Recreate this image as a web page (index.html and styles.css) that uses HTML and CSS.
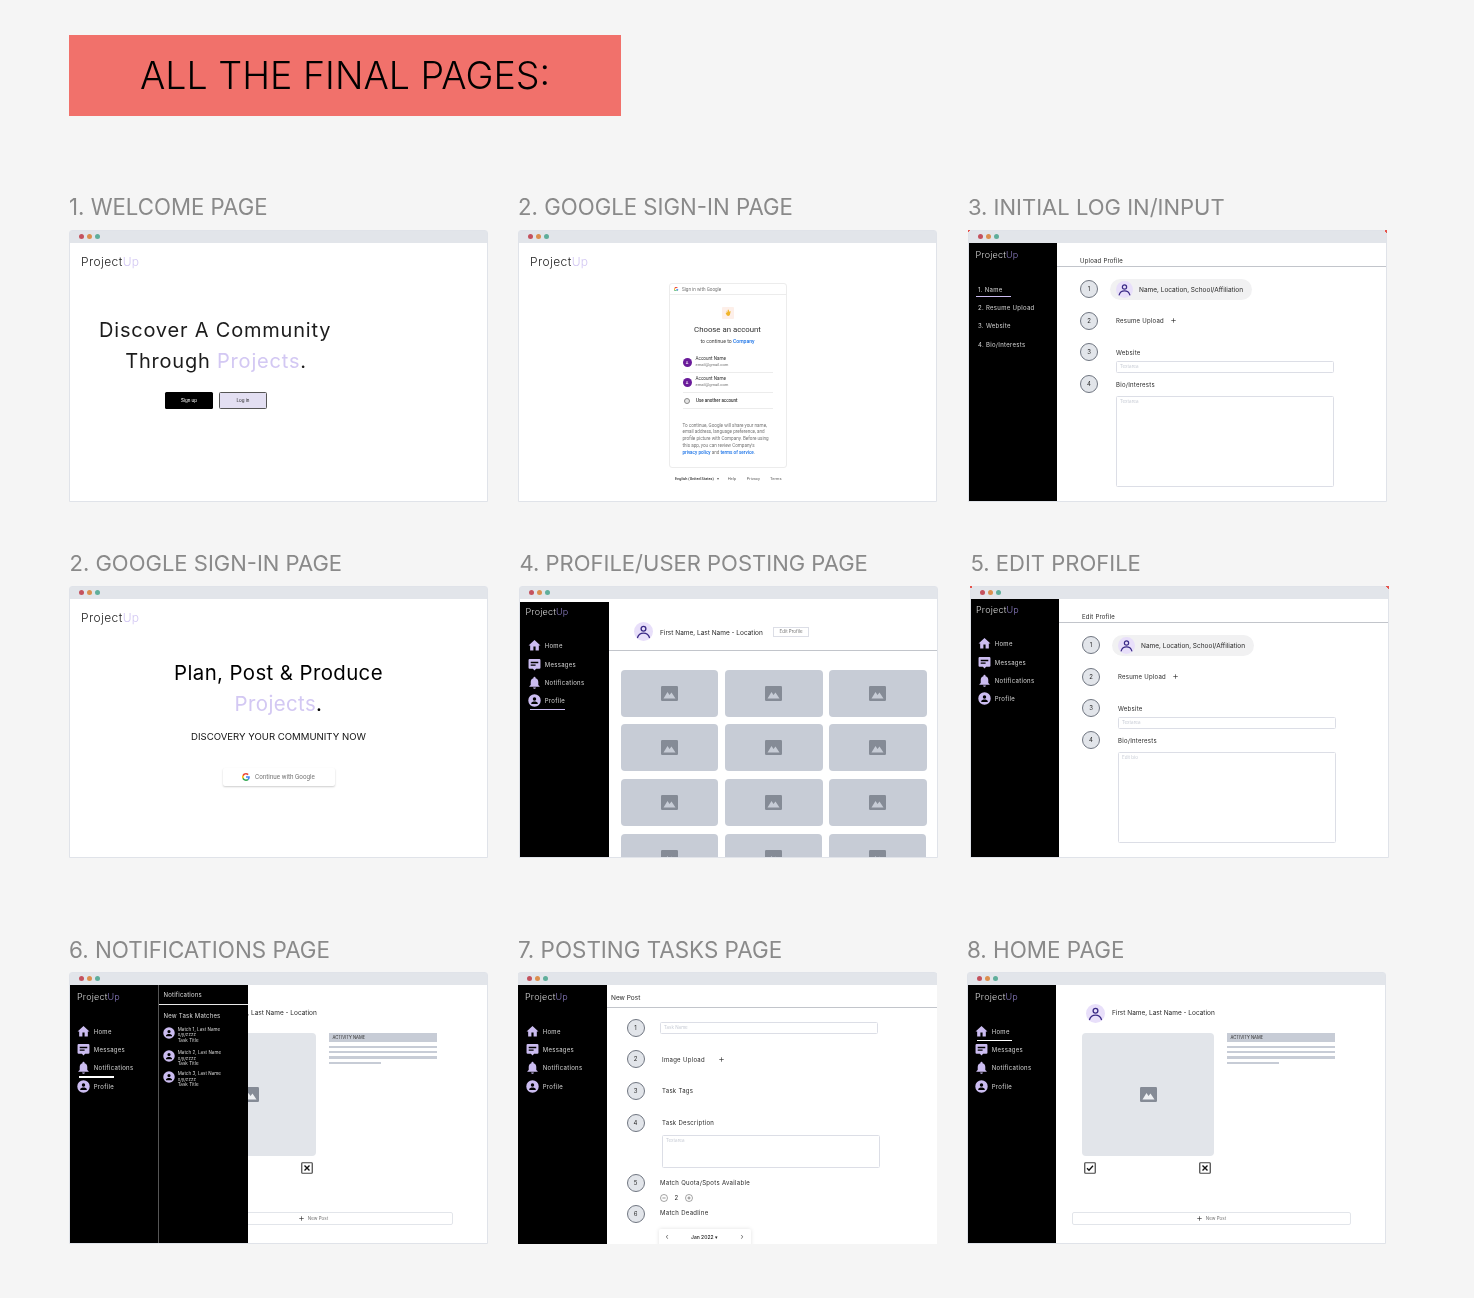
FILE: index.html
```html
<!DOCTYPE html>
<html lang="en">
<head>
  <meta charset="UTF-8" />
  <title>All the final pages</title>
  <link rel="stylesheet" href="styles.css">
</head>
<body>

  <!-- Icons -->
  <svg class="icon-defs" aria-hidden="true">
    <symbol id="i-home" viewBox="0 0 24 24"><path d="M10 21v-7h4v7h6v-9h3L12 2 1 12h3v9z"/></symbol>
    <symbol id="i-msg" viewBox="0 0 24 24"><path d="M3 2h18a2 2 0 0 1 2 2v14a2 2 0 0 1-2 2h-6l-3 3-3-3H3a2 2 0 0 1-2-2V4a2 2 0 0 1 2-2zm2 5v2.500h14V7zm0 5v2.500h9V12z" fill-rule="evenodd"/></symbol>
    <symbol id="i-bell" viewBox="0 0 24 24"><path d="M12 23.500c1.300 0 2.500-1 2.500-2.300h-5c0 1.300 1.200 2.300 2.500 2.300zm7-7v-5.500c0-3.300-1.800-6-5-6.800V3.500a2 2 0 0 0-4 0v.7C6.800 5 5 7.700 5 11v5.500L2.500 19v1h19v-1z"/></symbol>
    <symbol id="i-user" viewBox="0 0 24 24"><path fill-rule="evenodd" d="M12 .5a11.500 11.500 0 1 1 0 23 11.500 11.500 0 0 1 0-23zm0 5.500a3.200 3.200 0 1 0 0 6.400A3.200 3.200 0 0 0 12 6zm0 8c-2.800 0-6 1.300-6 3v1.500h12V17c0-1.700-3.200-3-6-3z"/></symbol>
    <symbol id="i-person" viewBox="0 0 24 24"><circle cx="12" cy="8.500" r="3" fill="none" stroke="#3a2a86" stroke-width="1.700"/><path d="M4.500 19.500c1.200-4 4.200-5.500 7.500-5.500s6.300 1.500 7.500 5.500" fill="none" stroke="#3a2a86" stroke-width="1.700" stroke-linecap="round"/></symbol>
    <symbol id="i-image" viewBox="0 0 34 30"><rect width="34" height="30" rx="2.500" fill="#858b96"/><path d="M5 25l8-13 4 6 4-5 8 12z" fill="currentColor"/></symbol>
    <symbol id="i-g" viewBox="0 0 48 48">
      <path fill="#EA4335" d="M24 9.500c3.540 0 6.710 1.220 9.210 3.600l6.850-6.850C35.900 2.380 30.470 0 24 0 14.620 0 6.510 5.380 2.560 13.220l7.980 6.190C12.430 13.720 17.740 9.500 24 9.500z"/>
      <path fill="#4285F4" d="M46.980 24.550c0-1.570-.15-3.090-.38-4.550H24v9.020h12.940c-.58 2.960-2.260 5.480-4.780 7.180l7.730 6c4.510-4.180 7.090-10.360 7.090-17.650z"/>
      <path fill="#FBBC05" d="M10.530 28.590c-.48-1.450-.76-2.990-.76-4.590s.27-3.140.76-4.590l-7.980-6.190C.92 16.460 0 20.120 0 24c0 3.880.92 7.540 2.560 10.780l7.970-6.190z"/>
      <path fill="#34A853" d="M24 48c6.480 0 11.930-2.130 15.890-5.810l-7.730-6c-2.150 1.450-4.920 2.300-8.160 2.300-6.260 0-11.570-4.220-13.470-9.910l-7.980 6.190C6.510 42.620 14.620 48 24 48z"/>
    </symbol>
    <symbol id="i-check" viewBox="0 0 24 24"><rect x="1.500" y="1.500" width="21" height="21" rx="1.500" fill="none" stroke="#444" stroke-width="2.400"/><path d="M6 12.500l4 4 8-9" fill="none" stroke="#111" stroke-width="2.600"/></symbol>
    <symbol id="i-cross" viewBox="0 0 24 24"><rect x="1.500" y="1.500" width="21" height="21" rx="1.500" fill="none" stroke="#444" stroke-width="2.400"/><path d="M7 7l10 10M17 7L7 17" stroke="#111" stroke-width="2.800"/></symbol>
    <symbol id="i-plus" viewBox="0 0 10 10"><path d="M5 .5v9M.5 5h9" stroke="#333" stroke-width="1.300" fill="none"/></symbol>
    <symbol id="i-minus-o" viewBox="0 0 10 10"><circle cx="5" cy="5" r="4.400" fill="none" stroke="#444" stroke-width=".6"/><path d="M3 5h4" stroke="#444" stroke-width=".7"/></symbol>
    <symbol id="i-plus-o" viewBox="0 0 10 10"><circle cx="5" cy="5" r="4.400" fill="none" stroke="#444" stroke-width=".6"/><path d="M3 5h4M5 3v4" stroke="#444" stroke-width=".7"/></symbol>
  </svg>

  <main class="board">

    <div class="banner"><h1>ALL THE FINAL PAGES:</h1></div>

    <!-- Row 1 -->
    <section class="row row-one">

      <article class="shot">
        <h2>1. WELCOME PAGE</h2>
        <div class="window">
          <div class="window-bar"><i class="dot red"></i><i class="dot orange"></i><i class="dot green"></i></div>
          <div class="window-body page">
            <div class="logo">Project<span>Up</span></div>
            <div class="welcome">
              <p class="hero">Discover A Community</p>
              <p class="hero hero-shift">Through <span>Projects</span>.</p>
              <div class="welcome-btns">
                <button class="btn btn-dark">Sign up</button>
                <button class="btn btn-light">Log in</button>
              </div>
            </div>
          </div>
        </div>
      </article>

      <article class="shot">
        <h2>2. GOOGLE SIGN-IN PAGE</h2>
        <div class="window">
          <div class="window-bar"><i class="dot red"></i><i class="dot orange"></i><i class="dot green"></i></div>
          <div class="window-body page">
            <div class="logo">Project<span>Up</span></div>
            <div class="google-card">
              <div class="google-head"><svg class="g-mark"><use href="#i-g"/></svg>Sign in with Google</div>
              <div class="google-app">
                <svg viewBox="0 0 12 12"><path d="M4.500 3.500l1 2 .3-2.800h1l.2 2.400 1-1 .6.500-.6 2.900c-.3 1-1 1.400-1.800 1.400-.9 0-1.400-.5-1.700-1.200L3.600 6l.7-.4.600.6z" fill="#f0b429"/></svg>
              </div>
              <div class="google-title">Choose an account</div>
              <div class="google-sub">to continue to <span>Company</span></div>
              <div class="account">
                <b class="account-pic">A</b>
                <div><div class="account-name">Account Name</div><div class="account-mail">email@gmail.com</div></div>
              </div>
              <div class="account">
                <b class="account-pic">A</b>
                <div><div class="account-name">Account Name</div><div class="account-mail">email@gmail.com</div></div>
              </div>
              <div class="account account-other"><b class="account-ring"></b><div class="account-name">Use another account</div></div>
              <p class="google-note">To continue, Google will share your name,<br>email address, language preference, and<br>profile picture with Company. Before using<br>this app, you can review Company's<br><span>privacy policy</span> and <span>terms of service</span>.</p>
            </div>
            <div class="google-foot">
              <span class="foot-lang">English (United States)</span><span class="foot-caret">▾</span>
              <span class="foot-help">Help</span><span class="foot-privacy">Privacy</span><span class="foot-terms">Terms</span>
            </div>
          </div>
        </div>
      </article>

      <article class="shot shot-nudge">
        <h2 class="title-tight">3. INITIAL LOG IN/INPUT</h2>
        <div class="window window-flag">
          <div class="window-bar"><i class="dot red"></i><i class="dot orange"></i><i class="dot green"></i></div>
          <div class="window-body">
            <aside class="sidebar">
              <div class="logo logo-side logo-three">Project<span>Up</span></div>
              <ul class="nav nav-steps">
                <li class="active">1. Name</li>
                <li>2. Resume Upload</li>
                <li>3. Website</li>
                <li>4. Bio/Interests</li>
              </ul>
            </aside>
            <div class="content">
              <div class="content-head">Upload Profile</div>
              <div class="steps">
                <div class="step">
                  <b class="num">1</b>
                  <div class="pill"><span class="avatar avatar-sm"><svg><use href="#i-person"/></svg></span>Name, Location, School/Affiliation</div>
                </div>
                <div class="step">
                  <b class="num">2</b>
                  <div class="label">Resume Upload<svg class="plus"><use href="#i-plus"/></svg></div>
                </div>
                <div class="step">
                  <b class="num">3</b>
                  <div class="group"><div class="label">Website</div><div class="field field-line">Textarea</div></div>
                </div>
                <div class="step">
                  <b class="num">4</b>
                  <div class="group"><div class="label">Bio/Interests</div><div class="field field-area">Textarea</div></div>
                </div>
              </div>
            </div>
          </div>
        </div>
      </article>

    </section>

    <!-- Row 2 -->
    <section class="row row-two">

      <article class="shot">
        <h2>2. GOOGLE SIGN-IN PAGE</h2>
        <div class="window">
          <div class="window-bar"><i class="dot red"></i><i class="dot orange"></i><i class="dot green"></i></div>
          <div class="window-body page">
            <div class="logo">Project<span>Up</span></div>
            <div class="landing">
              <p class="hero hero-big">Plan, Post &amp; Produce</p>
              <p class="hero hero-big"><span>Projects</span>.</p>
              <p class="landing-sub">DISCOVERY YOUR COMMUNITY NOW</p>
              <button class="google-btn"><svg class="g-mark"><use href="#i-g"/></svg>Continue with Google</button>
            </div>
          </div>
        </div>
      </article>

      <article class="shot">
        <h2>4. PROFILE/USER POSTING PAGE</h2>
        <div class="window">
          <div class="window-bar"><i class="dot red"></i><i class="dot orange"></i><i class="dot green"></i></div>
          <div class="window-body">
            <aside class="sidebar sidebar-low">
              <div class="logo logo-side">Project<span>Up</span></div>
              <ul class="nav">
                <li><svg><use href="#i-home"/></svg>Home</li>
                <li><svg><use href="#i-msg"/></svg>Messages</li>
                <li><svg><use href="#i-bell"/></svg>Notifications</li>
                <li class="active"><svg><use href="#i-user"/></svg>Profile</li>
              </ul>
            </aside>
            <div class="content">
              <div class="profile-head">
                <span class="avatar"><svg><use href="#i-person"/></svg></span>
                <span class="person">First Name, Last Name - Location</span>
                <button class="edit-btn">Edit Profile</button>
              </div>
              <div class="tiles">
                <div class="tile"><svg class="pic"><use href="#i-image"/></svg></div>
                <div class="tile"><svg class="pic"><use href="#i-image"/></svg></div>
                <div class="tile"><svg class="pic"><use href="#i-image"/></svg></div>
                <div class="tile"><svg class="pic"><use href="#i-image"/></svg></div>
                <div class="tile"><svg class="pic"><use href="#i-image"/></svg></div>
                <div class="tile"><svg class="pic"><use href="#i-image"/></svg></div>
                <div class="tile"><svg class="pic"><use href="#i-image"/></svg></div>
                <div class="tile"><svg class="pic"><use href="#i-image"/></svg></div>
                <div class="tile"><svg class="pic"><use href="#i-image"/></svg></div>
                <div class="tile"><svg class="pic"><use href="#i-image"/></svg></div>
                <div class="tile tile-narrow"><svg class="pic"><use href="#i-image"/></svg></div>
                <div class="tile tile-narrow"><svg class="pic"><use href="#i-image"/></svg></div>
              </div>
            </div>
          </div>
        </div>
      </article>

      <article class="shot shot-nudge">
        <h2>5. EDIT PROFILE</h2>
        <div class="window window-flag">
          <div class="window-bar"><i class="dot red"></i><i class="dot orange"></i><i class="dot green"></i></div>
          <div class="window-body">
            <aside class="sidebar sidebar-high">
              <div class="logo logo-side">Project<span>Up</span></div>
              <ul class="nav">
                <li><svg><use href="#i-home"/></svg>Home</li>
                <li><svg><use href="#i-msg"/></svg>Messages</li>
                <li><svg><use href="#i-bell"/></svg>Notifications</li>
                <li><svg><use href="#i-user"/></svg>Profile</li>
              </ul>
            </aside>
            <div class="content">
              <div class="content-head">Edit Profile</div>
              <div class="steps">
                <div class="step">
                  <b class="num">1</b>
                  <div class="pill"><span class="avatar avatar-sm"><svg><use href="#i-person"/></svg></span>Name, Location, School/Affiliation</div>
                </div>
                <div class="step">
                  <b class="num">2</b>
                  <div class="label">Resume Upload<svg class="plus"><use href="#i-plus"/></svg></div>
                </div>
                <div class="step">
                  <b class="num">3</b>
                  <div class="group"><div class="label">Website</div><div class="field field-line">Textarea</div></div>
                </div>
                <div class="step">
                  <b class="num">4</b>
                  <div class="group"><div class="label">Bio/Interests</div><div class="field field-area">Edit bio</div></div>
                </div>
              </div>
            </div>
          </div>
        </div>
      </article>

    </section>

    <!-- Row 3 -->
    <section class="row row-three">

      <article class="shot">
        <h2>6. NOTIFICATIONS PAGE</h2>
        <div class="window">
          <div class="window-bar"><i class="dot red"></i><i class="dot orange"></i><i class="dot green"></i></div>
          <div class="window-body">
            <aside class="sidebar">
              <div class="logo logo-side">Project<span>Up</span></div>
              <ul class="nav nav-white">
                <li><svg><use href="#i-home"/></svg>Home</li>
                <li><svg><use href="#i-msg"/></svg>Messages</li>
                <li class="active"><svg><use href="#i-bell"/></svg>Notifications</li>
                <li><svg><use href="#i-user"/></svg>Profile</li>
              </ul>
            </aside>
            <div class="content">
              <div class="feed-head">
                <span class="avatar"><svg><use href="#i-person"/></svg></span>
                <span class="person">First Name, Last Name - Location</span>
              </div>
              <div class="feed">
                <div class="feed-left">
                  <div class="feed-image"><svg class="pic"><use href="#i-image"/></svg></div>
                  <div class="feed-actions">
                    <svg><use href="#i-check"/></svg>
                    <svg><use href="#i-cross"/></svg>
                  </div>
                </div>
                <div class="activity">
                  <div class="activity-name">ACTIVITY NAME</div>
                  <i class="bar"></i><i class="bar"></i><i class="bar"></i><i class="bar bar-short"></i>
                </div>
              </div>
              <button class="new-post"><svg class="plus-sm"><use href="#i-plus"/></svg>New Post</button>
            </div>
            <div class="notifications">
              <div class="notifications-head">Notifications</div>
              <div class="notifications-title">New Task Matches</div>
              <div class="notice"><svg><use href="#i-user"/></svg><div>Match 1, Last Name<br>x/y/zzzz<br>Task Title</div></div>
              <div class="notice"><svg><use href="#i-user"/></svg><div>Match 2, Last Name<br>x/y/zzzz<br>Task Title</div></div>
              <div class="notice"><svg><use href="#i-user"/></svg><div>Match 3, Last Name<br>x/y/zzzz<br>Task Title</div></div>
            </div>
          </div>
        </div>
      </article>

      <article class="shot">
        <h2>7. POSTING TASKS PAGE</h2>
        <div class="window window-open">
          <div class="window-bar"><i class="dot red"></i><i class="dot orange"></i><i class="dot green"></i></div>
          <div class="window-body">
            <aside class="sidebar">
              <div class="logo logo-side logo-seven">Project<span>Up</span></div>
              <ul class="nav">
                <li><svg><use href="#i-home"/></svg>Home</li>
                <li><svg><use href="#i-msg"/></svg>Messages</li>
                <li><svg><use href="#i-bell"/></svg>Notifications</li>
                <li><svg><use href="#i-user"/></svg>Profile</li>
              </ul>
            </aside>
            <div class="content">
              <div class="post-head">New Post</div>
              <div class="steps steps-post">
                <div class="step">
                  <b class="num">1</b>
                  <div class="field field-line field-task">Task Name</div>
                </div>
                <div class="step">
                  <b class="num">2</b>
                  <div class="label label-in">Image Upload<svg class="plus plus-far"><use href="#i-plus"/></svg></div>
                </div>
                <div class="step">
                  <b class="num">3</b>
                  <div class="label label-in">Task Tags</div>
                </div>
                <div class="step step-tall">
                  <b class="num">4</b>
                  <div class="group"><div class="label label-in">Task Description</div><div class="field field-desc">Textarea</div></div>
                </div>
                <div class="step">
                  <b class="num">5</b>
                  <div class="group">
                    <div class="label">Match Quota/Spots Available</div>
                    <div class="counter"><svg><use href="#i-minus-o"/></svg><span>2</span><svg><use href="#i-plus-o"/></svg></div>
                  </div>
                </div>
                <div class="step">
                  <b class="num">6</b>
                  <div class="group">
                    <div class="label label-up">Match Deadline</div>
                    <div class="calendar"><span>‹</span><strong>Jan 2022 ▾</strong><span>›</span></div>
                  </div>
                </div>
              </div>
            </div>
          </div>
        </div>
      </article>

      <article class="shot">
        <h2>8. HOME PAGE</h2>
        <div class="window">
          <div class="window-bar"><i class="dot red"></i><i class="dot orange"></i><i class="dot green"></i></div>
          <div class="window-body">
            <aside class="sidebar">
              <div class="logo logo-side">Project<span>Up</span></div>
              <ul class="nav nav-white">
                <li class="active"><svg><use href="#i-home"/></svg>Home</li>
                <li><svg><use href="#i-msg"/></svg>Messages</li>
                <li><svg><use href="#i-bell"/></svg>Notifications</li>
                <li><svg><use href="#i-user"/></svg>Profile</li>
              </ul>
            </aside>
            <div class="content">
              <div class="feed-head">
                <span class="avatar"><svg><use href="#i-person"/></svg></span>
                <span class="person">First Name, Last Name - Location</span>
              </div>
              <div class="feed">
                <div class="feed-left">
                  <div class="feed-image"><svg class="pic"><use href="#i-image"/></svg></div>
                  <div class="feed-actions">
                    <svg><use href="#i-check"/></svg>
                    <svg><use href="#i-cross"/></svg>
                  </div>
                </div>
                <div class="activity">
                  <div class="activity-name">ACTIVITY NAME</div>
                  <i class="bar"></i><i class="bar"></i><i class="bar"></i><i class="bar bar-short"></i>
                </div>
              </div>
              <button class="new-post"><svg class="plus-sm"><use href="#i-plus"/></svg>New Post</button>
            </div>
          </div>
        </div>
      </article>

    </section>

  </main>
</body>
</html>
```

FILE: styles.css
```css
:root {
  --lilac: #d3c8f3;
  --icon: #cbbcf0;
  --line: #e0e3e9;
  --tile: #c7ccd6;
  --soft: #e2e5ea;
  --text: #2b2b2b;
}

* {
  box-sizing: border-box;
}

body {
  margin: 0;
  background-color: #f5f5f5;
  font-family: Inter, 'Noto Sans', sans-serif;
  color: var(--text);
}

p, h1, h2, ul {
  margin: 0;
  padding: 0;
}

button {
  font-family: inherit;
  padding: 0;
}

.icon-defs {
  display: none;
}

.board {
  padding: 35px 0 54px 69px;
  filter: blur(0.35px);
  will-change: transform;
}

/* Banner */
.banner {
  width: 552px;
  height: 81px;
  padding-left: 71px;
  background-color: #f1716b;
  display: flex;
  align-items: center;
}

.banner h1 {
  font-size: 37.600px;
  font-weight: 300;
  color: #000;
}

/* Rows */
.row {
  display: flex;
}

.row-one {
  margin-top: 79px;
  gap: 30px;
}

.row-two {
  margin-top: 49px;
  gap: 31px;
}

.row-three {
  margin-top: 80px;
  gap: 30px;
}

.shot {
  width: 419px;
}

.shot-nudge {
  margin-left: 1px;
}

.shot h2 {
  height: 24px;
  margin-bottom: 11px;
  font-size: 22.200px;
  line-height: 24px;
  font-weight: 400;
  color: #8a8a8a;
  white-space: nowrap;
}

.shot h2.title-tight {
  font-size: 22px;
}

.row-two .shot h2 {
  padding-left: 0.500px;
  font-size: 22px;
}

.row-three .shot h2 {
  margin-bottom: 10px;
  font-size: 22.400px;
}

/* Window frame */
.window {
  position: relative;
  height: 272px;
  display: flex;
  flex-direction: column;
  background-color: white;
  border: 1px solid var(--line);
  border-radius: 3px 3px 0 0;
}

.window-bar {
  height: 12px;
  flex: none;
  padding: 0 0 1px 9px;
  background-color: var(--soft);
  display: flex;
  align-items: center;
  gap: 3px;
}

.dot {
  width: 5px;
  height: 5px;
  border-radius: 50%;
}

.dot.red { background-color: #c4525e; }
.dot.orange { background-color: #dc8f4e; }
.dot.green { background-color: #5fae9b; }

.window-body {
  position: relative;
  flex: 1;
  min-height: 0;
  display: flex;
  overflow: hidden;
}

.window-flag::before, .window-flag::after {
  content: "";
  position: absolute;
  top: -1px;
  width: 3px;
  height: 3px;
}

.window-flag::before {
  left: -1px;
  background: linear-gradient(135deg, #e5544c 50%, transparent 50%);
}

.window-flag::after {
  right: -1px;
  background: linear-gradient(225deg, #e5544c 50%, transparent 50%);
}

.window-open {
  border-width: 1px 0 0 0;
}

/* Plain pages */
.page {
  flex-direction: column;
  padding: 12px 0 0 11px;
}

.logo {
  font-size: 12px;
  line-height: 14px;
  font-weight: 300;
  letter-spacing: 0.4px;
  color: #222;
}

.logo span {
  color: var(--lilac);
}

.hero {
  font-size: 20px;
  line-height: 31px;
  letter-spacing: 0.8px;
  text-align: center;
  color: #1c1c1c;
  white-space: nowrap;
}

.hero span {
  color: var(--lilac);
}

.hero-shift {
  padding-left: 3px;
}

.welcome {
  width: 231px;
  margin: 46px 0 0 18px;
}

.welcome-btns {
  margin-top: 15px;
  padding-left: 3px;
  display: flex;
  justify-content: center;
  gap: 6px;
}

.btn {
  width: 48px;
  height: 17px;
  font-size: 4.500px;
  border-radius: 1.500px;
}

.btn-dark {
  background-color: #000;
  color: white;
  border: none;
}

.btn-light {
  background-color: #e3dff2;
  color: #222;
  border: 1px solid #555;
}

/* Google account chooser */
.google-card {
  width: 118px;
  height: 185px;
  margin: 14px 0 0 138.500px;
  border: 1px solid #ececec;
  border-radius: 3px;
}

.google-head {
  height: 11px;
  padding-left: 4.500px;
  border-bottom: 1px solid #ececec;
  display: flex;
  align-items: center;
  gap: 3.500px;
  font-family: Roboto, sans-serif;
  font-size: 4.600px;
  color: #777;
}

.google-head .g-mark {
  width: 4.500px;
  height: 4.500px;
}

.google-app {
  width: 12px;
  height: 12px;
  margin: 12px auto 0;
  background-color: #fdefe9;
  border-radius: 1px;
  display: flex;
}

.google-title {
  margin-top: 5.500px;
  font-family: Roboto, sans-serif;
  font-size: 7.800px;
  line-height: 10px;
  text-align: center;
  color: #333;
}

.google-sub {
  margin-top: 3px;
  font-family: Roboto, sans-serif;
  font-size: 5.100px;
  line-height: 7px;
  text-align: center;
  color: #444;
}

.google-sub span, .google-note span {
  color: #1a73e8;
  font-weight: 500;
}

.account {
  width: 90px;
  height: 20px;
  margin-left: 13px;
  border-bottom: 1px solid #ececec;
  display: flex;
  align-items: center;
  gap: 4px;
  font-family: Roboto, sans-serif;
}

.google-sub + .account {
  margin-top: 8px;
}

.account-pic {
  width: 9px;
  height: 9px;
  flex: none;
  border-radius: 50%;
  background-color: #6a1b9a;
  color: white;
  font-size: 4px;
  font-weight: 400;
  line-height: 9px;
  text-align: center;
}

.account-name {
  font-size: 4.600px;
  line-height: 6px;
  color: #333;
}

.account-mail {
  font-size: 4.100px;
  line-height: 6px;
  color: #777;
}

.account-other {
  height: 16px;
  padding-top: 1.500px;
}

.account-other .account-name {
  font-size: 4.500px;
  font-weight: 500;
  white-space: nowrap;
}

.account-ring {
  width: 6px;
  height: 6px;
  margin: 0 2px 0 1.500px;
  flex: none;
  border-radius: 50%;
  background-color: #e6e6e6;
  border: 1px solid #888;
}

.google-note {
  width: 100px;
  margin: 14px 0 0 13px;
  font-family: Roboto, sans-serif;
  font-size: 4.600px;
  line-height: 6.750px;
  color: #777;
  white-space: nowrap;
}

.google-foot {
  margin: 8px 0 0 145px;
  display: flex;
  font-family: Roboto, sans-serif;
  font-size: 4.100px;
  line-height: 6px;
  color: #666;
  white-space: nowrap;
}

.foot-lang {
  width: 41px;
  font-size: 3.800px;
  font-weight: 500;
  color: #333;
}

.foot-caret {
  width: 11.700px;
  padding-left: 1px;
}

.foot-help {
  width: 19px;
}

.foot-privacy {
  width: 23.300px;
}

/* Landing */
.landing {
  width: 395px;
  margin-top: 31.500px;
  text-align: center;
}

.hero-big {
  font-size: 20.400px;
  letter-spacing: 0.4px;
  color: #000;
}

.landing-sub {
  margin-top: 12.500px;
  font-size: 9.600px;
  line-height: 12px;
  color: #111;
  white-space: nowrap;
}

.google-btn {
  width: 112px;
  height: 18px;
  margin-top: 25px;
  background-color: white;
  border: none;
  border-radius: 2px;
  box-shadow: 0 1px 2px rgba(0,0,0,0.2);
  display: inline-flex;
  align-items: center;
  justify-content: center;
  gap: 5px;
  font-family: Roboto, sans-serif;
  font-size: 6.300px;
  color: #777;
}

.google-btn .g-mark {
  width: 8px;
  height: 8px;
}

/* Sidebar */
.sidebar {
  width: 89px;
  flex: none;
  margin-left: -1px;
  padding-top: 5px;
  background-color: #000;
}

.window-open .sidebar {
  margin-left: 0;
}

.sidebar-low {
  margin: 2.500px 0 0;
  padding-top: 3px;
}

.sidebar-high {
  padding-top: 3.500px;
}

.logo-side {
  padding-left: 8px;
  font-size: 9px;
  letter-spacing: 0.2px;
  color: #d6d6d6;
}

.logo-side span {
  color: #8a7cc0;
}

.logo-three {
  padding-left: 7.500px;
}

.logo-seven {
  padding-left: 7px;
}

.sidebar-low .logo-side {
  padding-left: 5.500px;
}

.sidebar-high .logo-side {
  padding-left: 6px;
}

.nav {
  margin-top: 18.400px;
  list-style: none;
}

.nav li {
  position: relative;
  height: 18.200px;
  padding-left: 8.200px;
  display: flex;
  align-items: center;
  gap: 3.500px;
  font-size: 6px;
  letter-spacing: 0.3px;
  color: #cfcfcf;
}

.nav svg {
  width: 13px;
  height: 13px;
  fill: var(--icon);
}

.nav li.active::after {
  content: "";
  position: absolute;
  left: 10px;
  top: 17.500px;
  width: 34.500px;
  height: 1.500px;
  background-color: var(--icon);
}

.nav-white li.active::after {
  top: 17.300px;
  background-color: white;
}

.nav-steps li {
  padding-left: 10px;
}

.nav-steps li.active::after {
  left: 8px;
  top: 15.500px;
  width: 35px;
}

/* Main panel */
.content {
  flex: 1;
  min-width: 0;
}

.content-head {
  height: 24px;
  padding: 14px 0 0 23px;
  border-bottom: 1px solid #c2c5cb;
  font-size: 6px;
  line-height: 8px;
  letter-spacing: 0.2px;
}

.post-head {
  height: 22.500px;
  padding: 9px 0 0 4px;
  border-bottom: 1px solid #c2c5cb;
  font-size: 6.500px;
  line-height: 8px;
}

.steps {
  padding: 13px 0 0 23px;
}

.step {
  min-height: 31.700px;
  display: flex;
  align-items: flex-start;
  gap: 18px;
}

.num {
  width: 18px;
  height: 18px;
  flex: none;
  border-radius: 50%;
  background-color: var(--soft);
  border: 1px solid #6f7580;
  font-size: 6px;
  font-weight: 400;
  line-height: 16px;
  text-align: center;
}

.label {
  height: 18px;
  display: flex;
  align-items: center;
  font-size: 6px;
  letter-spacing: 0.25px;
  white-space: nowrap;
}

.plus {
  width: 5px;
  height: 5px;
  margin-left: 7px;
}

.pill {
  height: 21px;
  margin: -1px 0 0 -6px;
  padding: 0 9px 0 5.500px;
  background-color: #f1f1f2;
  border-radius: 11px;
  display: flex;
  align-items: center;
  gap: 6.500px;
  font-size: 6.500px;
  white-space: nowrap;
}

.avatar {
  width: 19px;
  height: 19px;
  flex: none;
  border-radius: 50%;
  background-color: #e8dffa;
}

.avatar svg {
  display: block;
  width: 100%;
  height: 100%;
}

.avatar-sm {
  width: 17px;
  height: 17px;
}

.group {
  min-width: 0;
}

.field {
  width: 218px;
  padding: 2px 3px;
  background-color: white;
  border: 1px solid #dcdee6;
  border-radius: 1.500px;
  font-size: 4.500px;
  line-height: 6px;
  color: #c9cdd6;
}

.field-line {
  height: 12px;
  margin-top: -0.500px;
}

.field-area {
  height: 91px;
  margin-top: 3px;
}

/* Profile page */
.profile-head {
  height: 51.500px;
  padding: 22.500px 0 0 25px;
  border-bottom: 1px solid #c2c5cb;
  display: flex;
  align-items: flex-start;
}

.person {
  margin-left: 7px;
  font-size: 6.500px;
  line-height: 19px;
  white-space: nowrap;
}

.profile-head .person {
  line-height: 23px;
}

.edit-btn {
  width: 35.500px;
  height: 10px;
  margin: 5px 0 0 10.500px;
  background-color: white;
  border: 1px solid #dcdee6;
  font-size: 4.500px;
  color: #777;
}

.tiles {
  padding: 19px 0 0 11.700px;
  display: grid;
  grid-template-columns: 97.500px 98px 97.500px;
  grid-auto-rows: 47px;
  gap: 7.700px 6.500px;
}

.tile {
  color: var(--tile);
  background-color: var(--tile);
  border-radius: 4px;
  display: flex;
  align-items: center;
  justify-content: center;
}

.tile-narrow {
  margin-right: 1px;
}

.pic {
  width: 17px;
  height: 15px;
}

/* Feed page */
.feed-head {
  height: 48px;
  padding: 19px 0 0 29.500px;
  display: flex;
  align-items: flex-start;
}

.feed-head .person {
  margin-left: 7.500px;
}

.feed {
  margin-left: 26px;
  display: flex;
  gap: 13px;
}

.feed-left {
  width: 132px;
}

.feed-image {
  height: 123px;
  color: #eef0f3;
  background-color: var(--soft);
  border-radius: 4px;
  display: flex;
  align-items: center;
  justify-content: center;
}

.feed-actions {
  margin-top: 5.500px;
  padding: 0 3.500px 0 2px;
  display: flex;
  justify-content: space-between;
}

.feed-actions svg {
  width: 12px;
  height: 12px;
}

.activity {
  width: 108px;
  display: flex;
  flex-direction: column;
}

.activity-name {
  height: 9px;
  margin-bottom: 3.500px;
  padding-left: 3.500px;
  background-color: var(--tile);
  font-size: 4.200px;
  line-height: 9px;
  color: #333;
}

.bar {
  height: 2.500px;
  margin-bottom: 2.900px;
  background-color: var(--tile);
}

.bar-short {
  width: 51.500px;
}

.new-post {
  width: 279px;
  height: 13px;
  margin: 38.500px 0 0 16px;
  background-color: white;
  border: 1px solid var(--soft);
  border-radius: 2px;
  display: flex;
  align-items: center;
  justify-content: center;
  gap: 4px;
  font-size: 4.500px;
  color: #777;
}

.plus-sm {
  width: 5px;
  height: 5px;
}

/* Notifications drawer */
.notifications {
  position: absolute;
  left: 88px;
  top: 0;
  bottom: 0;
  width: 89.500px;
  background-color: #000;
  border-left: 1px solid #555;
  color: #d6d6d6;
}

.notifications-head {
  height: 19.500px;
  padding: 5px 0 0 4.500px;
  border-bottom: 1.500px solid #e8e8e8;
  font-size: 6px;
  line-height: 10px;
  letter-spacing: 0.2px;
}

.notifications-title {
  margin: 7px 0 7px 4.500px;
  font-size: 6px;
  line-height: 8px;
  letter-spacing: 0.2px;
}

.notice {
  padding-left: 4px;
  display: flex;
  align-items: flex-start;
  gap: 2.700px;
  font-size: 4.500px;
  letter-spacing: 0.05px;
  line-height: 5.800px;
  white-space: nowrap;
}

.notice + .notice {
  margin-top: 6px;
}

.notice:last-child {
  margin-top: 3.600px;
}

.notice svg {
  width: 12px;
  height: 12px;
  flex: none;
  fill: var(--icon);
}

/* Posting page */
.steps-post {
  padding: 11px 0 0 19.500px;
}

.steps-post .step {
  gap: 15.500px;
}

.steps-post .step-tall {
  min-height: 60px;
}

.steps-post .label {
  letter-spacing: 0.3px;
}

.label-in {
  margin-left: 2px;
}

.steps-post .label-up {
  margin-top: -1.500px;
}

.field-task {
  margin-top: 3.500px;
}

.field-desc {
  height: 33px;
  margin: 3px 0 0 2px;
}

.plus-far {
  margin-left: 14px;
}

.counter {
  margin-top: 2px;
  display: flex;
  align-items: center;
  gap: 6.500px;
  font-size: 6px;
}

.counter svg {
  width: 8px;
  height: 8px;
}

.calendar {
  width: 92px;
  height: 24px;
  margin: 7.500px 0 0 -1.500px;
  padding: 3px 7px 0;
  border-radius: 2px;
  background-color: white;
  box-shadow: 0 0 4px rgba(0,0,0,0.12);
  display: flex;
  justify-content: space-between;
  font-size: 5px;
  line-height: 10px;
  color: #666;
}

.calendar strong {
  color: #222;
  font-weight: 500;
}

.calendar span {
  font-size: 8px;
  line-height: 9px;
}
```
